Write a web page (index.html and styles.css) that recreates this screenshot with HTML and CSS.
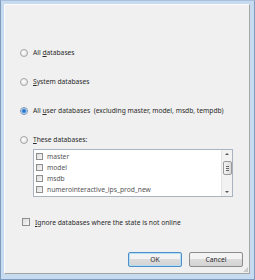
FILE: index.html
```html
<!DOCTYPE html>
<html lang="en">
<head>
  <meta charset="UTF-8" />
  <title>Select databases</title>
  <link rel="stylesheet" href="styles.css">
</head>
<body>
  <div class="frame">
    <div class="dialog">

      <div class="options">
        <label class="option"><span class="radio"></span><span>All <u>d</u>atabases</span></label>
        <label class="option"><span class="radio"></span><span><u>S</u>ystem databases</span></label>
        <label class="option"><span class="radio checked"></span><span>All <u>u</u>ser databases&nbsp; (excluding master, model, msdb, tempdb)</span></label>
        <label class="option"><span class="radio"></span><span><u>T</u>hese databases:</span></label>
      </div>

      <div class="listbox">
        <div class="items">
          <div class="item"><span class="check"></span><span>master</span></div>
          <div class="item"><span class="check"></span><span>model</span></div>
          <div class="item"><span class="check"></span><span>msdb</span></div>
          <div class="item"><span class="check"></span><span>numerointeractive_ips_prod_new</span></div>
        </div>
        <div class="scrollbar">
          <span class="arrow up"></span>
          <span class="thumb"><i></i><i></i><i></i></span>
          <span class="arrow down"></span>
        </div>
      </div>

      <label class="ignore"><span class="check"></span><span><u>I</u>gnore databases where the state is not online</span></label>

      <div class="buttons">
        <button class="btn default">OK</button>
        <button class="btn">Cancel</button>
      </div>

      <div class="grip"></div>
    </div>
  </div>
</body>
</html>
```

FILE: styles.css
```css
* {
  margin: 0;
  padding: 0;
  box-sizing: border-box;
}
body {
  width: 255px;
  height: 280px;
  background: #fff;
  font-family: 'Noto Sans', sans-serif;
  font-size: 6.7px;
  color: #2a2a2a;
}
.frame {
  width: 255px;
  height: 280px;
  background: #c6daf0;
  border: 1px solid #7f9bbd;
  border-top-color: #a9c0dc;
  padding: 3px 4px 5px 3px;
}
.dialog {
  position: relative;
  height: 100%;
  background: #f0f0f0;
  border: 1px solid #a5a5a5;
  border-top-color: #fbfbfb;
  border-left-color: #fbfbfb;
}
.options {
  display: flex;
  flex-direction: column;
  gap: 21px;
  padding: 44px 0 0 15px;
}
.option {
  display: flex;
  align-items: center;
  gap: 5px;
  height: 8px;
  line-height: 8px;
  white-space: nowrap;
}
u {
  text-decoration-thickness: 1px;
  text-underline-offset: 1px;
}
.radio {
  width: 8px;
  height: 8px;
  border-radius: 50%;
  border: 1px solid #a4a4a4;
  background: radial-gradient(circle at 40% 40%, #fff, #dcdcdc);
  flex: none;
}
.radio.checked {
  background: radial-gradient(circle, #1b5fae 0, #3c8ad8 1.5px, #9cc6ee 2.5px, #f4f4f4 3px);
  border-color: #7d97b6;
}
.listbox {
  display: flex;
  width: 200px;
  height: 48px;
  margin: 5px 0 0 28px;
  background: #fff;
  border: 1px solid #a9b4c0;
}
.items {
  flex: 1;
  padding-top: 1px;
}
.item {
  display: flex;
  align-items: center;
  gap: 4px;
  height: 11px;
  padding-left: 2px;
  color: #555;
  white-space: nowrap;
  overflow: hidden;
}
.check {
  width: 7px;
  height: 7px;
  border: 1px solid #8e8e8e;
  background: linear-gradient(135deg, #dcdcdc, #f8f8f8);
  flex: none;
}
.scrollbar {
  width: 11px;
  display: flex;
  flex-direction: column;
  align-items: center;
  justify-content: space-between;
  background: #f2f2f2;
  border-left: 1px solid #e3e3e3;
  padding: 3px 0;
}
.arrow {
  width: 0;
  height: 0;
  border-left: 2px solid transparent;
  border-right: 2px solid transparent;
}
.arrow.up {
  border-bottom: 2px solid #555;
}
.arrow.down {
  border-top: 2px solid #555;
}
.thumb {
  width: 9px;
  height: 14px;
  margin-bottom: 10px;
  border: 1px solid #9a9a9a;
  border-radius: 2px;
  background: linear-gradient(to right, #f4f4f4, #dadada);
  display: flex;
  flex-direction: column;
  align-items: center;
  justify-content: center;
  gap: 1px;
}
.thumb i {
  width: 3px;
  height: 1px;
  background: #666;
}
.ignore {
  display: flex;
  align-items: center;
  gap: 5px;
  height: 8px;
  margin: 21px 0 0 17px;
  white-space: nowrap;
}
.ignore .check {
  width: 8px;
  height: 8px;
}
.buttons {
  display: flex;
  justify-content: flex-end;
  gap: 7px;
  padding: 26px 6px 0 0;
}
.btn {
  width: 54px;
  height: 15px;
  font-family: inherit;
  font-size: 6.7px;
  color: #2a2a2a;
  border: 1px solid #8c8c8c;
  border-radius: 2px;
  background: linear-gradient(#f3f3f3 50%, #dcdcdc 50%, #d3d3d3);
}
.btn.default {
  border-color: #4c8fc9;
  box-shadow: inset 0 0 0 1px #b4dcf3;
}
.grip {
  position: absolute;
  right: 1px;
  bottom: 1px;
  width: 5px;
  height: 5px;
  background: radial-gradient(circle, #9a9a9a 0.6px, transparent 0.8px) 0 0 / 2px 2px;
  clip-path: polygon(100% 0, 100% 100%, 0 100%);
}
```
